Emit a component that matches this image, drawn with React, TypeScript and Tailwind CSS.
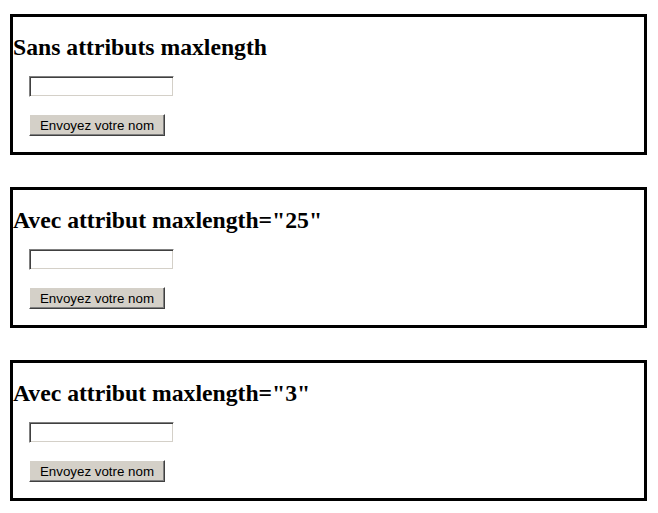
import React from "react";

const titles = [
  "Sans attributs maxlength",
  'Avec attribut maxlength="25"',
  'Avec attribut maxlength="3"',
];

function Box({ title }: { title: string }) {
  return (
    <div className="w-[637px] h-[141px] border-[3px] border-solid border-black flex flex-col">
      <h2
        className="m-0 mt-[16px] text-[23.7px] leading-[28px] font-bold text-black"
        style={{ fontFamily: '"Liberation Serif", "Times New Roman", serif' }}
      >
        {title}
      </h2>
      <div className="pl-[16px] mt-[15px] flex flex-col items-start">
        <input
          type="text"
          className="w-[145px] h-[21px] bg-white border border-solid border-t-[#808080] border-l-[#808080] border-r-white border-b-white shadow-[inset_1px_1px_0_#404040,inset_-1px_-1px_0_#d4d0c8] outline-none p-0"
        />
        <button
          type="button"
          className="mt-[17px] w-[136px] h-[22px] bg-[#d4d0c8] text-black text-[13.33px] leading-none border border-solid border-t-white border-l-white border-r-[#404040] border-b-[#404040] shadow-[inset_-1px_-1px_0_#808080] flex items-center justify-center p-0 pt-[1px]"
          style={{ fontFamily: '"Liberation Sans", Arial, sans-serif' }}
        >
          Envoyez votre nom
        </button>
      </div>
    </div>
  );
}

export default function App() {
  return (
    <div className="w-[658px] h-[513px] bg-white pt-[14px] pl-[10px] flex flex-col gap-[32px]">
      {titles.map((t) => (
        <Box key={t} title={t} />
      ))}
    </div>
  );
}
